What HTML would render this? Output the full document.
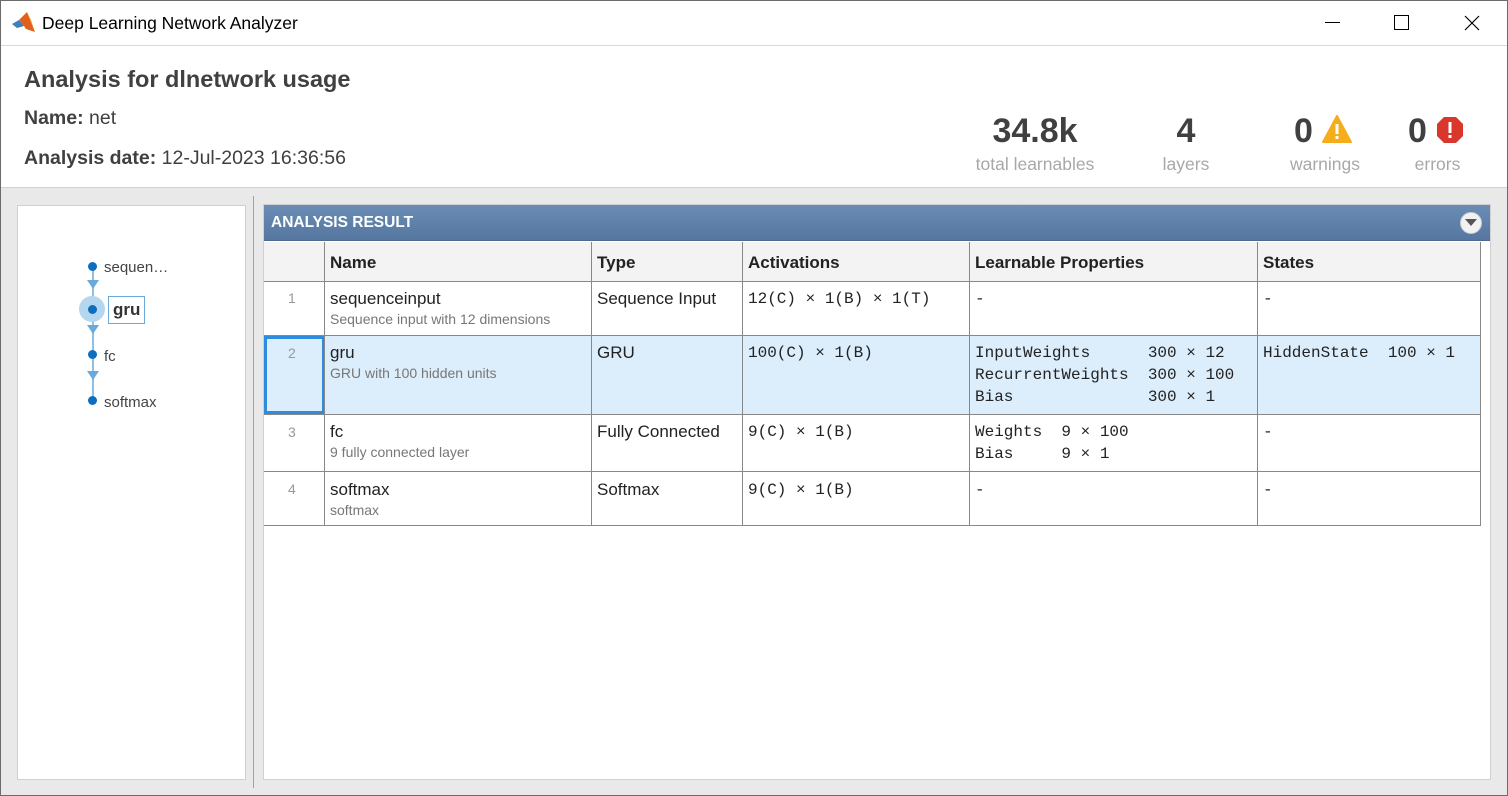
<!DOCTYPE html>
<html><head><meta charset="utf-8"><style>
*{box-sizing:border-box;margin:0;padding:0}
body{width:1508px;height:796px;position:relative;overflow:hidden;background:#fff;font-family:"Liberation Sans",sans-serif;}
.a{position:absolute}
.win{left:0;top:0;width:1508px;height:796px;border:1px solid #6b6b6b;}
.mono{font-family:"Liberation Mono",monospace;font-size:16px;color:#222;white-space:pre;line-height:22px}
.cell{font-size:17px;color:#222}
.sub{font-size:14px;color:#777}
.vl{width:1px;background:#888}
.hl{height:1px;background:#888}
</style></head><body>
<div class="a win"></div>
<svg class="a" style="left:12px;top:12px" width="24" height="22" viewBox="0 0 24 22"><polygon points="0,12 7,8 12,14 5,16" fill="#3f7fbf"/><polygon points="7,8 15,0 23,20 14,17 12,14" fill="#e2601e"/><polygon points="15,0 19,8 23,20" fill="#f5a623"/></svg>
<div class="a" style="left:42px;top:13px;font-size:17.5px;color:#000">Deep Learning Network Analyzer</div>
<div class="a" style="left:1325px;top:22px;width:15px;height:1px;background:#000"></div>
<div class="a" style="left:1394px;top:15px;width:15px;height:15px;border:1px solid #000"></div>
<svg class="a" style="left:1464px;top:15px" width="16" height="16"><path d="M1 1L15 15M15 1L1 15" stroke="#000" stroke-width="1.2"/></svg>
<div class="a hl" style="left:1px;top:45px;width:1506px;background:#d8d8d8"></div>
<div class="a" style="left:24px;top:66px;font-size:23.5px;font-weight:bold;color:#404040">Analysis for dlnetwork usage</div>
<div class="a" style="left:24px;top:107px;font-size:19.5px;color:#404040"><b>Name:</b> net</div>
<div class="a" style="left:24px;top:147px;font-size:19.5px;color:#404040"><b>Analysis date:</b> 12-Jul-2023 16:36:56</div>
<div class="a" style="left:960px;top:112px;width:150px;text-align:center;font-size:34px;font-weight:bold;color:#404040">34.8k</div>
<div class="a" style="left:960px;top:154px;width:150px;text-align:center;font-size:17.5px;color:#a8a8a8">total learnables</div>
<div class="a" style="left:1136px;top:112px;width:100px;text-align:center;font-size:34px;font-weight:bold;color:#404040">4</div>
<div class="a" style="left:1136px;top:154px;width:100px;text-align:center;font-size:17.5px;color:#a8a8a8">layers</div>
<div class="a" style="left:1294px;top:112px;font-size:34px;font-weight:bold;color:#404040">0</div>
<svg class="a" style="left:1322px;top:115px" width="30" height="28" viewBox="0 0 30 28"><path d="M15 1L29 27H1Z" fill="#f5ad1c" stroke="#f5ad1c" stroke-linejoin="round" stroke-width="2"/><rect x="13.5" y="9" width="3" height="10" fill="#fff"/><rect x="13.5" y="21" width="3" height="3" fill="#fff"/></svg>
<div class="a" style="left:1270px;top:154px;width:110px;text-align:center;font-size:17.5px;color:#a8a8a8">warnings</div>
<div class="a" style="left:1408px;top:112px;font-size:34px;font-weight:bold;color:#404040">0</div>
<svg class="a" style="left:1436px;top:116px" width="28" height="28" viewBox="0 0 28 28"><polygon points="8,1 20,1 27,8 27,20 20,27 8,27 1,20 1,8" fill="#d9362c"/><rect x="12.5" y="6" width="3" height="11" fill="#fff"/><rect x="12.5" y="19" width="3" height="3" fill="#fff"/></svg>
<div class="a" style="left:1400px;top:154px;width:75px;text-align:center;font-size:17.5px;color:#a8a8a8">errors</div>
<div class="a" style="left:1px;top:187px;width:1506px;height:608px;background:#e9e9e9;border-top:1px solid #d0d0d0"></div>
<div class="a" style="left:17px;top:205px;width:229px;height:575px;background:#fff;border:1px solid #d0d0d0"></div>
<div class="a" style="left:253px;top:196px;width:1px;height:592px;background:#a0a0a0"></div>
<div class="a" style="left:92px;top:266px;width:2px;height:136px;background:#8ec0e8"></div>
<div class="a" style="left:79px;top:296px;width:26px;height:26px;border-radius:50%;background:#b5d6ef"></div>
<svg class="a" style="left:86px;top:280px" width="14" height="105"><path d="M1 0H13L7 9Z M1 45H13L7 54Z M1 91H13L7 100Z" fill="#6aa9dc"/></svg>
<div class="a" style="left:88px;top:262px;width:9px;height:9px;border-radius:50%;background:#0d6ec0"></div>
<div class="a" style="left:88px;top:305px;width:9px;height:9px;border-radius:50%;background:#0d6ec0"></div>
<div class="a" style="left:88px;top:350px;width:9px;height:9px;border-radius:50%;background:#0d6ec0"></div>
<div class="a" style="left:88px;top:396px;width:9px;height:9px;border-radius:50%;background:#0d6ec0"></div>
<div class="a" style="left:104px;top:259px;font-size:15px;color:#444">sequen…</div>
<div class="a" style="left:108px;top:296px;width:37px;height:28px;border:1px solid #6aa9dc;font-size:17px;font-weight:bold;color:#333;padding:3px 0 0 4px">gru</div>
<div class="a" style="left:104px;top:348px;font-size:15px;color:#444">fc</div>
<div class="a" style="left:104px;top:394px;font-size:15px;color:#444">softmax</div>
<div class="a" style="left:263px;top:204px;width:1228px;height:576px;background:#fff;border:1px solid #d0d0d0"></div>
<div class="a" style="left:264px;top:205px;width:1226px;height:36px;background:linear-gradient(#6b8db5,#55779f);border-bottom:1px solid #4a6a90"></div>
<div class="a" style="left:271px;top:214px;font-size:15.5px;font-weight:bold;color:#fff">ANALYSIS RESULT</div>
<div class="a" style="left:1460px;top:212px;width:22px;height:22px;border-radius:50%;background:#f2f2f2;border:1px solid #ccc"></div>
<svg class="a" style="left:1465px;top:219px" width="12" height="8"><path d="M0 0H12L6 7Z" fill="#555"/></svg>
<div class="a" style="left:264px;top:242px;width:1216px;height:39px;background:#f3f3f3"></div>
<div class="a" style="left:264px;top:336px;width:1216px;height:78px;background:#dcedfb"></div>
<div class="a" style="left:264px;top:336px;width:61px;height:78px;border:3px solid #2d8ce0"></div>
<div class="a hl" style="left:264px;top:281px;width:1216px"></div>
<div class="a hl" style="left:264px;top:335px;width:1216px"></div>
<div class="a hl" style="left:264px;top:414px;width:1216px"></div>
<div class="a hl" style="left:264px;top:471px;width:1216px"></div>
<div class="a hl" style="left:264px;top:525px;width:1216px"></div>
<div class="a vl" style="left:324px;top:242px;height:284px"></div>
<div class="a vl" style="left:591px;top:242px;height:284px"></div>
<div class="a vl" style="left:742px;top:242px;height:284px"></div>
<div class="a vl" style="left:969px;top:242px;height:284px"></div>
<div class="a vl" style="left:1257px;top:242px;height:284px"></div>
<div class="a vl" style="left:1480px;top:242px;height:284px"></div>
<div class="a cell" style="left:330px;top:253px;font-weight:bold">Name</div>
<div class="a cell" style="left:597px;top:253px;font-weight:bold">Type</div>
<div class="a cell" style="left:748px;top:253px;font-weight:bold">Activations</div>
<div class="a cell" style="left:975px;top:253px;font-weight:bold">Learnable Properties</div>
<div class="a cell" style="left:1263px;top:253px;font-weight:bold">States</div>

<div class="a sub" style="left:288px;top:290px;color:#999">1</div>
<div class="a cell" style="left:330px;top:289px">sequenceinput</div>
<div class="a sub" style="left:330px;top:311px">Sequence input with 12 dimensions</div>
<div class="a cell" style="left:597px;top:289px">Sequence Input</div>
<div class="a mono" style="left:748px;top:288px">12(C) × 1(B) × 1(T)</div>
<div class="a mono" style="left:975px;top:288px">-</div>
<div class="a mono" style="left:1263px;top:288px">-</div>

<div class="a sub" style="left:288px;top:345px;color:#999">2</div>
<div class="a cell" style="left:330px;top:343px">gru</div>
<div class="a sub" style="left:330px;top:365px">GRU with 100 hidden units</div>
<div class="a cell" style="left:597px;top:343px">GRU</div>
<div class="a mono" style="left:748px;top:342px">100(C) × 1(B)</div>
<div class="a mono" style="left:975px;top:342px">InputWeights      300 × 12
RecurrentWeights  300 × 100
Bias              300 × 1</div>
<div class="a mono" style="left:1263px;top:342px">HiddenState  100 × 1</div>

<div class="a sub" style="left:288px;top:424px;color:#999">3</div>
<div class="a cell" style="left:330px;top:422px">fc</div>
<div class="a sub" style="left:330px;top:444px">9 fully connected layer</div>
<div class="a cell" style="left:597px;top:422px">Fully Connected</div>
<div class="a mono" style="left:748px;top:421px">9(C) × 1(B)</div>
<div class="a mono" style="left:975px;top:421px">Weights  9 × 100
Bias     9 × 1</div>
<div class="a mono" style="left:1263px;top:421px">-</div>

<div class="a sub" style="left:288px;top:481px;color:#999">4</div>
<div class="a cell" style="left:330px;top:480px">softmax</div>
<div class="a sub" style="left:330px;top:502px">softmax</div>
<div class="a cell" style="left:597px;top:480px">Softmax</div>
<div class="a mono" style="left:748px;top:479px">9(C) × 1(B)</div>
<div class="a mono" style="left:975px;top:479px">-</div>
<div class="a mono" style="left:1263px;top:479px">-</div>
</body></html>
